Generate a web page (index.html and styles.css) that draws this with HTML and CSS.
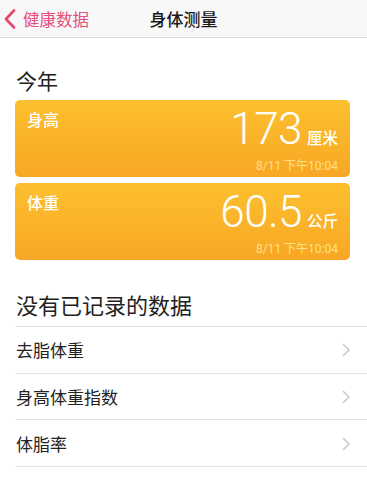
FILE: index.html
```html
<!DOCTYPE html>
<html lang="zh">
<head>
<meta charset="utf-8">
<link rel="stylesheet" href="styles.css">
</head>
<body>
<header class="nav">
  <div class="nav-back">
    <svg class="chev-back" width="12" height="20" viewBox="0 0 12 20"><path d="M10 1.5 L2 10 L10 18.5" fill="none" stroke="#e5466f" stroke-width="2.6" stroke-linecap="round" stroke-linejoin="round"/></svg>
    <span>健康数据</span>
  </div>
  <div class="nav-title">身体测量</div>
  <div></div>
</header>
<main class="content">
  <h2 class="section-title year">今年</h2>
  <div class="card">
    <div class="card-label">身高</div>
    <div class="card-right">
      <div class="card-value"><span class="num">173</span><span class="unit">厘米</span></div>
      <div class="card-date">8/11 下午10:04</div>
    </div>
  </div>
  <div class="card">
    <div class="card-label">体重</div>
    <div class="card-right">
      <div class="card-value"><span class="num">60.5</span><span class="unit">公斤</span></div>
      <div class="card-date">8/11 下午10:04</div>
    </div>
  </div>
  <h2 class="section-title empty">没有已记录的数据</h2>
  <ul class="list">
    <li class="row"><span>去脂体重</span><svg class="chev" width="8" height="14" viewBox="0 0 8 14"><path d="M1 1 L7 7 L1 13" fill="none" stroke="#c7c7cc" stroke-width="1.5"/></svg></li>
    <li class="row"><span>身高体重指数</span><svg class="chev" width="8" height="14" viewBox="0 0 8 14"><path d="M1 1 L7 7 L1 13" fill="none" stroke="#c7c7cc" stroke-width="1.5"/></svg></li>
    <li class="row"><span>体脂率</span><svg class="chev" width="8" height="14" viewBox="0 0 8 14"><path d="M1 1 L7 7 L1 13" fill="none" stroke="#c7c7cc" stroke-width="1.5"/></svg></li>
  </ul>
</main>
</body>
</html>
```
FILE: styles.css
```css
* { box-sizing: border-box; }
body {
  margin: 0;
  background: #ffffff;
  font-family: "Noto Sans CJK SC", "Noto Sans", sans-serif;
  color: #222;
}
.nav {
  height: 38px;
  background: #f8f8f8;
  border-bottom: 1px solid #dcdcdc;
  display: grid;
  grid-template-columns: 1fr auto 1fr;
  align-items: center;
}
.nav-back {
  display: flex;
  align-items: center;
  padding-left: 4px;
  color: #e7507e;
  font-size: 16.5px;
}
.chev-back { margin-right: 7px; }
.nav-title {
  font-size: 17px;
  font-weight: 500;
  color: #1a1a1a;
}
.content {
  padding: 0 17px 0 15px;
}
.section-title {
  margin: 0;
  font-weight: 400;
  font-size: 21px;
  line-height: 1;
  color: #222;
  padding-left: 1px;
}
.year { padding-top: 32px; padding-bottom: 9px; }
.card {
  height: 77px;
  border-radius: 5px;
  background: linear-gradient(180deg, #fdc02f 0%, #f7a725 100%);
  display: flex;
  justify-content: space-between;
  padding: 10px 12px 0 12px;
  margin-bottom: 6px;
  color: #fff;
}
.card-label {
  font-size: 16px;
  font-weight: 500;
  line-height: 1.2;
}
.card-right {
  display: flex;
  flex-direction: column;
  align-items: flex-end;
}
.card-value {
  display: flex;
  align-items: baseline;
  line-height: 1;
  margin-top: -3px;
}
.num {
  font-family: "Roboto", "Liberation Sans", sans-serif;
  font-weight: 300;
  font-size: 44px;
  letter-spacing: -0.5px;
}
.unit {
  font-size: 15.5px;
  font-weight: 500;
  margin-left: 5px;
}
.card-date {
  font-family: "Roboto", "Noto Sans CJK SC", sans-serif;
  font-size: 12px;
  color: #fee08c;
  margin-top: 9px;
  line-height: 1;
}
.empty { padding-top: 27px; padding-bottom: 11px; font-size: 22px; }
.list {
  list-style: none;
  margin: 0 -17px 0 0;
  padding: 0;
  border-top: 1px solid #e3e3e3;
}
.row {
  height: 46.7px;
  border-bottom: 1px solid #e3e3e3;
  display: flex;
  align-items: center;
  justify-content: space-between;
  padding-left: 1px;
  padding-right: 17px;
  font-size: 17px;
  color: #222;
}
.chev { margin-top: 1px; }
```
